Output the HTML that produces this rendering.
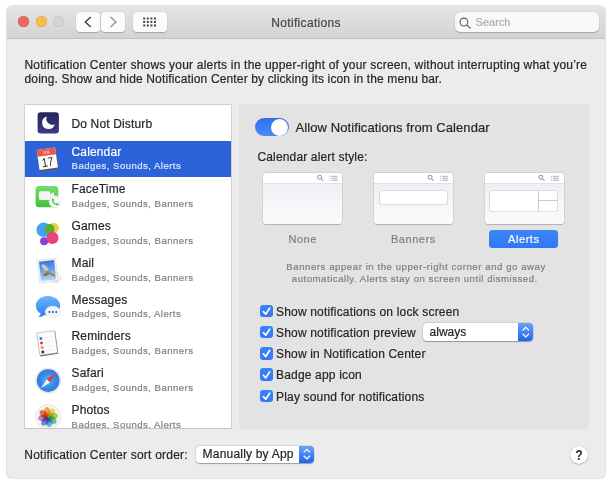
<!DOCTYPE html>
<html><head><meta charset="utf-8">
<style>
*{margin:0;padding:0;box-sizing:border-box}
html,body{width:610px;height:487px;background:#fff;overflow:hidden;font-family:"Liberation Sans",sans-serif;color:#262626}
#root{position:absolute;left:0;top:0;width:610px;height:487px;will-change:transform}
#root .t,#root .ti,#root .cbt,#root .su,#root .tl{-webkit-text-stroke:.2px currentColor}
.a{position:absolute}
#win{position:absolute;left:6.8px;top:5.7px;width:598.2px;height:472.4px;background:#ececec;border-radius:5px;box-shadow:0 0 0 0.6px #cbcbcb;overflow:hidden}
#tb{position:absolute;left:6.8px;top:5.7px;width:598.2px;height:33.1px;background:linear-gradient(#e5e5e5,#d3d3d3);border-bottom:1px solid #c2c2c2;border-radius:5px 5px 0 0}
.light{position:absolute;top:16.4px;width:11px;height:11px;border-radius:50%}
.btn{position:absolute;top:12.1px;height:20px;background:#fbfbfb;border-radius:4px;box-shadow:0 0.5px 1px rgba(0,0,0,.22),0 0 0 .3px rgba(0,0,0,.08)}
.t{position:absolute;white-space:nowrap;line-height:1}
.row{position:absolute;left:24px;width:208.5px;height:36.75px}
.ti{position:absolute;left:71.5px;font-size:12px;white-space:nowrap;line-height:1;color:#262626;letter-spacing:.15px}
.su{position:absolute;left:71.6px;font-size:9.6px;white-space:nowrap;line-height:1;color:#808080;letter-spacing:.45px}
.ic{position:absolute;left:32px;width:32px;height:32px}
.thumb{position:absolute;top:172.9px;width:79px;height:51.6px;border-radius:3px;background:linear-gradient(#fff 0,#fff 10.5px,#f0eff5 11px,#fbfbfd 100%);box-shadow:0 0 0 .4px rgba(0,0,0,.13),0 .6px 1px rgba(0,0,0,.16)}
.thumb .hd{position:absolute;left:0;top:10.4px;width:100%;height:1px;background:#e0e0e4}
.tl{position:absolute;font-size:11px;letter-spacing:.55px;line-height:1;white-space:nowrap;color:#7f7f7f;top:233.8px;text-align:center;width:100px}
.cb{position:absolute;left:260px;width:13px;height:12.7px;border-radius:3px;background:linear-gradient(#3a83f7,#3478f6)}
.cbt{position:absolute;left:276px;font-size:12px;line-height:1;white-space:nowrap;color:#262626;letter-spacing:.18px}
.pop{position:absolute;background:#fff;border-radius:4px;box-shadow:0 .5px 1px rgba(0,0,0,.3),0 0 0 .5px rgba(0,0,0,.12)}
.pop .bl{position:absolute;right:0;top:0;bottom:0;width:15px;border-radius:0 4px 4px 0;background:linear-gradient(#6b9ff6,#2164f3)}
</style></head><body><div id="root">
<div id="win"></div>
<div id="tb">
</div>
<div class="light" style="left:17.6px;background:#ee6a5f;box-shadow:inset 0 0 0 .5px #d9574c"></div>
<div class="light" style="left:35.6px;background:#f5bf4f;box-shadow:inset 0 0 0 .5px #dba53c"></div>
<div class="light" style="left:53.3px;background:#d5d4d5;box-shadow:inset 0 0 0 .6px #c2c2c2"></div>
<div class="btn" style="left:75.9px;width:23.9px"></div>
<div class="btn" style="left:101.2px;width:23.9px"></div>
<svg class="a" style="left:0;top:0" width="170" height="40">
  <path d="M90.7 17 L85.3 21.9 L90.7 26.9" fill="none" stroke="#3a3a3a" stroke-width="1.3"/>
  <path d="M110.6 17 L116 21.9 L110.6 26.9" fill="none" stroke="#8e8e8e" stroke-width="1.3"/>
</svg>
<div class="btn" style="left:132.9px;width:34.1px"></div>
<svg class="a" style="left:0;top:0" width="170" height="40" fill="#454545">
  <g>
  <rect x="143.2" y="17.5" width="2" height="2"/><rect x="146.8" y="17.5" width="2" height="2"/><rect x="150.4" y="17.5" width="2" height="2"/><rect x="154" y="17.5" width="2" height="2"/>
  <rect x="143.2" y="20.9" width="2" height="2"/><rect x="146.8" y="20.9" width="2" height="2"/><rect x="150.4" y="20.9" width="2" height="2"/><rect x="154" y="20.9" width="2" height="2"/>
  <rect x="143.2" y="24.5" width="2" height="2"/><rect x="146.8" y="24.5" width="2" height="2"/><rect x="150.4" y="24.5" width="2" height="2"/><rect x="154" y="24.5" width="2" height="2"/>
  </g>
</svg>
<div class="t" style="left:271.3px;top:17px;font-size:12px;color:#474747;letter-spacing:.33px">Notifications</div>
<div class="btn" style="left:454.8px;top:12px;width:144px;height:20px;border-radius:5px;background:#f8f8f8"></div>
<svg class="a" style="left:455px;top:12px" width="24" height="20">
  <circle cx="8.9" cy="10" r="3.9" fill="none" stroke="#5c5c5c" stroke-width="1.05"/>
  <path d="M11.7 12.8 L15.6 16.5" stroke="#5c5c5c" stroke-width="1.15"/>
</svg>
<div class="t" style="left:475.6px;top:16.5px;font-size:11px;color:#ababab">Search</div>

<div class="t" style="left:24.5px;top:57.8px;font-size:12px;letter-spacing:.18px;line-height:14px"><span style="letter-spacing:.2px">Notification Center shows your alerts in the upper-right of your screen, without interrupting what you’re</span><br><span style="letter-spacing:.145px">doing. Show and hide Notification Center by clicking its icon in the menu bar.</span></div>

<!-- list -->
<div class="a" style="left:24.6px;top:104.9px;width:206.7px;height:323.2px;background:#fff;box-shadow:0 0 0 .7px #c6c6c6;overflow:hidden">
  <div class="a" style="left:0;top:36.6px;width:208.5px;height:35.6px;background:#2c63d9"></div>
</div>
<div class="ti" style="top:117.5px">Do Not Disturb</div>
<div class="ti" style="top:146.2px;color:#fff">Calendar</div>
<div class="su" style="top:161.3px;color:#dce6fb">Badges, Sounds, Alerts</div>
<div class="ti" style="top:183px">FaceTime</div>
<div class="su" style="top:198.8px">Badges, Sounds, Banners</div>
<div class="ti" style="top:220px">Games</div>
<div class="su" style="top:235.8px">Badges, Sounds, Banners</div>
<div class="ti" style="top:256.7px">Mail</div>
<div class="su" style="top:272.6px">Badges, Sounds, Banners</div>
<div class="ti" style="top:294px">Messages</div>
<div class="su" style="top:309.4px">Badges, Sounds, Alerts</div>
<div class="ti" style="top:330px">Reminders</div>
<div class="su" style="top:346.3px">Badges, Sounds, Banners</div>
<div class="ti" style="top:367px">Safari</div>
<div class="su" style="top:383.1px">Badges, Sounds, Banners</div>
<div class="ti" style="top:404px">Photos</div>
<div class="a" style="left:24px;top:400px;width:208px;height:28.3px;overflow:hidden">
  <div class="su" style="top:19.9px;left:47.6px">Badges, Sounds, Alerts</div>
</div>

<!-- icons -->
<svg class="a" style="left:0;top:0" width="240" height="430">
  <defs>
    <linearGradient id="dnd" x1="0" y1="0" x2="0" y2="1"><stop offset="0" stop-color="#25255a"/><stop offset="1" stop-color="#3a3a82"/></linearGradient>
    <linearGradient id="ft" x1="0" y1="0" x2="0" y2="1"><stop offset="0" stop-color="#72df6c"/><stop offset="1" stop-color="#3fc23a"/></linearGradient>
    <linearGradient id="msg" x1="0" y1="0" x2="0" y2="1"><stop offset="0" stop-color="#6ab8f7"/><stop offset="1" stop-color="#2a7df0"/></linearGradient>
    <linearGradient id="sky" x1="0" y1="0" x2="0" y2="1"><stop offset="0" stop-color="#2f78d8"/><stop offset="1" stop-color="#a9d3f5"/></linearGradient>
    <radialGradient id="saf" cx=".5" cy=".5" r=".5"><stop offset="0" stop-color="#45bdee"/><stop offset=".75" stop-color="#3483e6"/><stop offset="1" stop-color="#2f6fe0"/></radialGradient>
  </defs>
  <!-- DND -->
  <rect x="37.6" y="112.2" width="21.3" height="21.3" rx="3.2" fill="url(#dnd)"/>
  <path d="M46.97 116.48 A6.4 6.4 0 1 0 54.72 124.23 A5.8 5.8 0 0 1 46.97 116.48 Z" fill="#fff"/>
  <!-- Calendar -->
  <g transform="translate(47.4 158.8) rotate(-8)">
    <rect x="-9.1" y="-9.4" width="18.9" height="21.1" fill="#5a5a5a"/>
    <rect x="-9.4" y="-10.1" width="18.6" height="20.2" fill="#fbfbfb"/>
    <rect x="-9.4" y="-10.1" width="18.6" height="6.8" fill="#e5584c"/>
    <text x="-.1" y="-5.4" font-size="4.2" fill="#fff" text-anchor="middle" font-family="Liberation Sans">JUL</text>
    <text x="0" y="0" font-size="12.5" fill="#1e1e1e" text-anchor="middle" font-family="Liberation Sans" transform="translate(-.3 7.6) scale(.82 1)">17</text>
  </g>
  <!-- FaceTime -->
  <rect x="35.6" y="185.9" width="22.7" height="21.4" rx="3.5" fill="url(#ft)"/>
  <rect x="38.9" y="191.2" width="11.5" height="8.8" rx="1.8" fill="#f4f4f4"/>
  <path d="M50 194.5 L54 192 L54 199 L50 197 Z" fill="#f4f4f4"/>
  <circle cx="55" cy="201.7" r="6" fill="#f7f7f7" stroke="#d9d9d9" stroke-width=".4"/>
  <path d="M51.9 198.6 q-.6 2.8 1.6 5 q2.2 2.2 5 1.6 l.2-1.2 l-1.7-.9 l-1 .8 q-1.6-.6-2.8-2.8 l.8-1 l-.9-1.7 z" fill="#3dbd3a"/>
  <!-- Games -->
  <circle cx="43.6" cy="229.8" r="7.2" fill="#45a2f2"/>
  <circle cx="53.6" cy="227.9" r="5.2" fill="#f2cf3c"/>
  <circle cx="49.6" cy="229.1" r="5" fill="#52ad32"/>
  <circle cx="44.1" cy="241.2" r="4" fill="#8840d6"/>
  <circle cx="52.4" cy="237.9" r="6.1" fill="#e8437a"/>
  <!-- Mail -->
  <g transform="translate(.8 0) rotate(-6 47 271)">
    <rect x="37.5" y="259" width="18.5" height="23" fill="#f2f2f2" stroke="#d5d5d5" stroke-width=".5"/>
    <rect x="39.2" y="260.8" width="15.2" height="19.4" fill="url(#sky)"/>
    <ellipse cx="44.6" cy="267.6" rx="4.4" ry="2" fill="#cfc8ba" transform="rotate(55 44.6 267.6)"/>
    <ellipse cx="47.4" cy="272.6" rx="2.6" ry="1.6" fill="#a8844c" transform="rotate(30 47.4 272.6)"/>
    <ellipse cx="44.8" cy="274.2" rx="3" ry="1.3" fill="#8a6a3c" transform="rotate(-10 44.8 274.2)"/>
    <ellipse cx="51.6" cy="275.2" rx="2.6" ry="1.1" fill="#6f6250" transform="rotate(30 51.6 275.2)"/>
  </g>
  <circle cx="55.6" cy="277.8" r="5" fill="none" stroke="#c4c4c4" stroke-width="1" stroke-dasharray="1 .6"/>
  <circle cx="55.6" cy="277.8" r="3.2" fill="none" stroke="#d0d0d0" stroke-width=".6"/>
  <!-- Messages -->
  <path d="M47.8 296 C54.6 296 60.2 300.4 60.2 305.8 C60.2 311.2 54.6 315.6 47.8 315.6 C46.6 315.6 45.4 315.4 44.3 315.1 C42.8 316.6 40.6 317.3 38.5 317 C39.6 316.1 40.4 314.8 40.6 313.5 C37.6 311.7 35.8 309 35.8 305.8 C35.8 300.4 41.1 296 47.8 296 Z" fill="url(#msg)"/>
  <ellipse cx="52.8" cy="312" rx="7.6" ry="6.1" fill="#f2f4f8" stroke="#dfe3ea" stroke-width=".4"/>
  <circle cx="49.4" cy="312" r=".9" fill="#1d3f84"/><circle cx="52.8" cy="312" r=".9" fill="#1d3f84"/><circle cx="56.2" cy="312" r=".9" fill="#1d3f84"/>
  <!-- Reminders -->
  <g transform="rotate(-8 48 343)">
    <rect x="38.5" y="332.3" width="18.2" height="22.9" fill="#6e6e6e"/>
    <rect x="38.2" y="331.6" width="18" height="22.4" fill="#fbfbfb" stroke="#9a9a9a" stroke-width=".5"/>
    <circle cx="41.6" cy="337.6" r="1.5" fill="#2f7af2"/>
    <circle cx="41.6" cy="342.1" r="1.5" fill="#e2413c"/>
    <circle cx="41.6" cy="346.6" r="1.5" fill="#f08d2d"/>
    <circle cx="41.6" cy="351.1" r="1.5" fill="#333"/>
    <path d="M44 337.4 h9 M44 341.9 h9 M44 346.4 h9 M44 350.9 h9" stroke="#e6e6e6" stroke-width=".5"/>
  </g>
  <!-- Safari -->
  <circle cx="48.2" cy="380.6" r="12.7" fill="#ececec" stroke="#d4d4d4" stroke-width=".5"/>
  <circle cx="48.2" cy="380.6" r="11.3" fill="url(#saf)"/>
  <circle cx="48.2" cy="380.6" r="10.2" fill="none" stroke="#8fc6f3" stroke-width=".6" stroke-dasharray=".5 1" opacity=".7"/>
  <path d="M56.1 373 L50.1 382.6 L46.6 379.3 Z" fill="#ea3a36"/>
  <path d="M41 388.2 L46.6 379.3 L50.1 382.6 Z" fill="#f0f0f0"/>
  <!-- Photos -->
  <circle cx="48.1" cy="417.2" r="12.6" fill="#f6f6f6" stroke="#d8d8d8" stroke-width=".6"/>
  <g transform="translate(48.1 417.1)"><ellipse cx="-1.1" cy="-5" rx="3.2" ry="5.1" fill="#f6ab45" style="mix-blend-mode:multiply" transform="rotate(0)"/><ellipse cx="-1.1" cy="-5" rx="3.2" ry="5.1" fill="#f7d95c" style="mix-blend-mode:multiply" transform="rotate(45)"/><ellipse cx="-1.1" cy="-5" rx="3.2" ry="5.1" fill="#abd760" style="mix-blend-mode:multiply" transform="rotate(90)"/><ellipse cx="-1.1" cy="-5" rx="3.2" ry="5.1" fill="#68c9a2" style="mix-blend-mode:multiply" transform="rotate(135)"/><ellipse cx="-1.1" cy="-5" rx="3.2" ry="5.1" fill="#66b2e9" style="mix-blend-mode:multiply" transform="rotate(180)"/><ellipse cx="-1.1" cy="-5" rx="3.2" ry="5.1" fill="#7d84d0" style="mix-blend-mode:multiply" transform="rotate(225)"/><ellipse cx="-1.1" cy="-5" rx="3.2" ry="5.1" fill="#bd88c8" style="mix-blend-mode:multiply" transform="rotate(270)"/><ellipse cx="-1.1" cy="-5" rx="3.2" ry="5.1" fill="#e86a5c" style="mix-blend-mode:multiply" transform="rotate(315)"/></g>
</svg>
<!-- list bottom edge cover for photos -->
<div class="a" style="left:23.9px;top:428.1px;width:208.1px;height:10px;background:#ececec;border-top:.7px solid #c6c6c6"></div>

<!-- right panel -->
<div class="a" style="left:240.4px;top:104.9px;width:347.2px;height:323.5px;background:#e3e3e3;border-radius:3px;box-shadow:0 0 0 .6px #d8d8d8"></div>
<div class="a" style="left:254.9px;top:117.6px;width:34.4px;height:18.9px;border-radius:9.5px;background:linear-gradient(#2f6ef0,#4a8bf6)"></div>
<div class="a" style="left:270.9px;top:118.9px;width:17.3px;height:17.3px;border-radius:50%;background:#fff;box-shadow:0 0 0 .4px rgba(0,0,0,.1)"></div>
<div class="t" style="left:295.6px;top:121.1px;font-size:13px;letter-spacing:.08px">Allow Notifications from Calendar</div>
<div class="t" style="left:257.4px;top:150.5px;font-size:12px;letter-spacing:.16px">Calendar alert style:</div>

<div class="thumb" style="left:263.3px"><div class="hd"></div></div>
<div class="thumb" style="left:373.8px"><div class="hd"></div>
  <div class="a" style="left:6.4px;top:18.1px;width:67.3px;height:12.8px;border-radius:2px;background:#fff;box-shadow:0 0 0 .6px #c6c6cc"></div>
</div>
<div class="thumb" style="left:484.6px"><div class="hd"></div>
  <div class="a" style="left:5.5px;top:18.1px;width:67.2px;height:19.8px;border-radius:2px;background:#fff;box-shadow:0 0 0 .6px #c9c9ce"></div>
  <div class="a" style="left:53.8px;top:18.1px;width:.7px;height:19.8px;background:#c9c9ce"></div>
  <div class="a" style="left:53.8px;top:27.2px;width:18.9px;height:.7px;background:#c9c9ce"></div>
</div>
<svg class="a" style="left:0;top:0" width="610" height="200">
  <g id="ti" fill="none" stroke="#777" stroke-width=".8">
    <circle cx="319.6" cy="177.2" r="2"/><path d="M321.1 178.7 L323.3 180.9" stroke-width="1"/>
    <path d="M329.6 176.3 h.9 M331.6 176.3 h5.8 M329.6 178.3 h.9 M331.6 178.3 h5.8 M329.6 180.3 h.9 M331.6 180.3 h5.8" stroke-width=".6"/>
  </g>
  <use href="#ti" x="110.5"/>
  <use href="#ti" x="221.3"/>
</svg>
<div class="tl" style="left:252.7px">None</div>
<div class="tl" style="left:363.4px">Banners</div>
<div class="a" style="left:489.2px;top:230px;width:69px;height:17.8px;border-radius:3.5px;background:linear-gradient(#3d86f7,#3077f4)"></div>
<div class="tl" style="left:473.8px;color:#fff">Alerts</div>

<div class="t" style="left:286.3px;top:261.3px;font-size:9.6px;color:#7f7f7f;letter-spacing:.56px;line-height:12.5px;text-align:center;width:258px"><span style="position:relative;left:0">Banners appear in the upper-right corner and go away</span></div>
<div class="t" style="left:291.8px;top:274.3px;font-size:9.6px;color:#7f7f7f;letter-spacing:.53px">automatically. Alerts stay on screen until dismissed.</div>

<div class="cb" style="top:304.7px"></div>
<div class="cb" style="top:325.7px"></div>
<div class="cb" style="top:347px"></div>
<div class="cb" style="top:368.4px"></div>
<div class="cb" style="top:389.7px"></div>
<svg class="a" style="left:0;top:0" width="300" height="410">
  <g id="ck" fill="none" stroke="#fff" stroke-width="1.7" stroke-linecap="round" stroke-linejoin="round"><path d="M263.4 311.6 L265.7 314.2 L269.6 308.2"/></g>
  <use href="#ck" y="21"/><use href="#ck" y="42.3"/><use href="#ck" y="63.7"/><use href="#ck" y="85"/>
</svg>
<div class="cbt" style="top:305.6px">Show notifications on lock screen</div>
<div class="cbt" style="top:326.6px">Show notification preview</div>
<div class="cbt" style="top:348px">Show in Notification Center</div>
<div class="cbt" style="top:369.3px">Badge app icon</div>
<div class="cbt" style="top:390.7px">Play sound for notifications</div>

<div class="pop" style="left:422.7px;top:323.3px;width:110.5px;height:17.8px"><div class="bl"></div></div>
<div class="t" style="left:429.6px;top:325.7px;font-size:12px">always</div>

<div class="t" style="left:24.3px;top:448.6px;font-size:12px;letter-spacing:.22px">Notification Center sort order:</div>
<div class="pop" style="left:195.8px;top:445.6px;width:118.2px;height:17.6px"><div class="bl"></div></div>
<div class="t" style="left:202.6px;top:447.9px;font-size:12px;letter-spacing:.2px">Manually by App</div>
<svg class="a" style="left:0;top:0" width="610" height="487">
  <g id="ud" fill="none" stroke="#fff" stroke-width="1.2"><path d="M522.6 330.5 L525.8 327.4 L529 330.5 M522.6 333.8 L525.8 336.9 L529 333.8"/></g>
  <use href="#ud" x="-218.9" y="121.9"/>
</svg>

<div class="a" style="left:569.9px;top:446.1px;width:18px;height:18px;border-radius:50%;background:#fff;box-shadow:0 .5px 1px rgba(0,0,0,.3),0 0 0 .4px rgba(0,0,0,.12)"></div>
<div class="t" style="left:575.1px;top:449.2px;font-size:13px;font-weight:bold;color:#333;-webkit-text-stroke:0;transform:scale(.95,1.14);transform-origin:50% 85%">?</div>
</div></body></html>
